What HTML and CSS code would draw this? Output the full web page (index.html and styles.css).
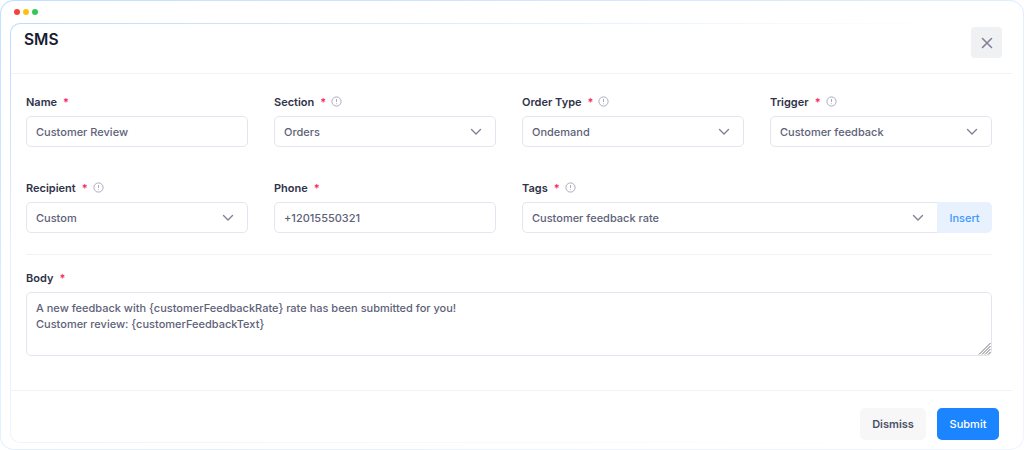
FILE: index.html
```html
<!DOCTYPE html>
<html lang="en">
<head>
<meta charset="utf-8">
<title>SMS</title>
<link rel="stylesheet" href="styles.css">
</head>
<body>
<div class="frame">
  <div class="dots"><span class="dot red"></span><span class="dot yellow"></span><span class="dot green"></span></div>
  <div class="modal">
    <header class="modal-head">
      <h1 class="title">SMS</h1>
      <button class="close" type="button" aria-label="Close">
        <svg width="12" height="12" viewBox="0 0 12 12"><path d="M1.5 1.5l9 9M10.5 1.5l-9 9" stroke="#7e8299" stroke-width="1.6" fill="none" stroke-linecap="round"/></svg>
      </button>
    </header>
    <div class="modal-body">
      <div class="grid">
        <div class="field">
          <div class="label">Name<span class="req">*</span></div>
          <div class="control">Customer Review</div>
        </div>
        <div class="field">
          <div class="label">Section<span class="req">*</span><svg class="info" width="11" height="11" viewBox="0 0 11 11"><circle cx="5.5" cy="5.5" r="4.6" fill="none" stroke="#a1a5b7" stroke-width="0.9"/><path d="M5.5 3v3M5.5 7.4v.7" stroke="#a1a5b7" stroke-width="0.9" fill="none"/></svg></div>
          <div class="control select">Orders<svg class="chev" width="12" height="8" viewBox="0 0 12 8"><path d="M1.5 1.5L6 6l4.5-4.5" stroke="#7e8299" stroke-width="1.4" fill="none" stroke-linecap="round" stroke-linejoin="round"/></svg></div>
        </div>
        <div class="field">
          <div class="label">Order Type<span class="req">*</span><svg class="info" width="11" height="11" viewBox="0 0 11 11"><circle cx="5.5" cy="5.5" r="4.6" fill="none" stroke="#a1a5b7" stroke-width="0.9"/><path d="M5.5 3v3M5.5 7.4v.7" stroke="#a1a5b7" stroke-width="0.9" fill="none"/></svg></div>
          <div class="control select">Ondemand<svg class="chev" width="12" height="8" viewBox="0 0 12 8"><path d="M1.5 1.5L6 6l4.5-4.5" stroke="#7e8299" stroke-width="1.4" fill="none" stroke-linecap="round" stroke-linejoin="round"/></svg></div>
        </div>
        <div class="field">
          <div class="label">Trigger<span class="req">*</span><svg class="info" width="11" height="11" viewBox="0 0 11 11"><circle cx="5.5" cy="5.5" r="4.6" fill="none" stroke="#a1a5b7" stroke-width="0.9"/><path d="M5.5 3v3M5.5 7.4v.7" stroke="#a1a5b7" stroke-width="0.9" fill="none"/></svg></div>
          <div class="control select">Customer feedback<svg class="chev" width="12" height="8" viewBox="0 0 12 8"><path d="M1.5 1.5L6 6l4.5-4.5" stroke="#7e8299" stroke-width="1.4" fill="none" stroke-linecap="round" stroke-linejoin="round"/></svg></div>
        </div>
        <div class="field">
          <div class="label">Recipient<span class="req">*</span><svg class="info" width="11" height="11" viewBox="0 0 11 11"><circle cx="5.5" cy="5.5" r="4.6" fill="none" stroke="#a1a5b7" stroke-width="0.9"/><path d="M5.5 3v3M5.5 7.4v.7" stroke="#a1a5b7" stroke-width="0.9" fill="none"/></svg></div>
          <div class="control select">Custom<svg class="chev" width="12" height="8" viewBox="0 0 12 8"><path d="M1.5 1.5L6 6l4.5-4.5" stroke="#7e8299" stroke-width="1.4" fill="none" stroke-linecap="round" stroke-linejoin="round"/></svg></div>
        </div>
        <div class="field">
          <div class="label">Phone<span class="req">*</span></div>
          <div class="control">+12015550321</div>
        </div>
        <div class="field wide">
          <div class="label">Tags<span class="req">*</span><svg class="info" width="11" height="11" viewBox="0 0 11 11"><circle cx="5.5" cy="5.5" r="4.6" fill="none" stroke="#a1a5b7" stroke-width="0.9"/><path d="M5.5 3v3M5.5 7.4v.7" stroke="#a1a5b7" stroke-width="0.9" fill="none"/></svg></div>
          <div class="group">
            <div class="control select joined">Customer feedback rate<svg class="chev" width="12" height="8" viewBox="0 0 12 8"><path d="M1.5 1.5L6 6l4.5-4.5" stroke="#7e8299" stroke-width="1.4" fill="none" stroke-linecap="round" stroke-linejoin="round"/></svg></div>
            <button class="insert" type="button">Insert</button>
          </div>
        </div>
      </div>
      <hr class="rule">
      <div class="field">
        <div class="label">Body<span class="req">*</span></div>
        <div class="textarea">A new feedback with {customerFeedbackRate} rate has been submitted for you!<br>Customer review: {customerFeedbackText}
          <svg class="grip" width="13" height="13" viewBox="0 0 13 13"><path d="M12.5 1L1 12.5M12.5 4L4 12.5M12.5 7L7 12.5M12.5 10L10 12.5" stroke="#777" stroke-width="1" fill="none"/></svg>
        </div>
      </div>
    </div>
    <footer class="modal-foot">
      <button class="btn light" type="button">Dismiss</button>
      <button class="btn primary" type="button">Submit</button>
    </footer>
  </div>
</div>
</body>
</html>
```
FILE: styles.css
```css
* { box-sizing: border-box; }
html, body { margin: 0; padding: 0; }
body {
  width: 1024px;
  height: 450px;
  overflow: hidden;
  background: #fff;
  font-family: Inter, "Liberation Sans", sans-serif;
  font-size: 11px;
}
.frame {
  width: 1024px;
  height: 450px;
  border: 1px solid transparent;
  border-radius: 14px;
  background:
    linear-gradient(#fff, #fff) padding-box,
    linear-gradient(160deg, #c4dffd 0%, #e3f0fe 50%, #eef5fd 100%) border-box;
  padding: 0 0 6px 9px;
  display: flex;
  flex-direction: column;
}
.dots { display: flex; gap: 3px; height: 22px; padding: 8px 0 0 4px; flex: none; }
.dot { width: 6px; height: 6px; border-radius: 50%; }
.red { background: #f6423c; }
.yellow { background: #fcc212; }
.green { background: #35c759; }
.modal {
  flex: 1;
  width: 1002px;
  border: 1px solid transparent;
  border-right: 0;
  border-radius: 10px 0 0 10px;
  background:
    linear-gradient(#fff, #fff) padding-box,
    linear-gradient(to right, transparent 0%, rgba(255,255,255,0.55) 50%, #fff 93%) border-box,
    linear-gradient(to bottom, #bcdcfd 0%, #e3f0fe 55%, #eef5fd 100%) border-box;
  display: flex;
  flex-direction: column;
}
.modal-head {
  height: 50px;
  flex: none;
  display: flex;
  justify-content: space-between;
  align-items: flex-start;
  border-bottom: 1px solid #f1f2f5;
  padding: 3px 10px 0 13px;
}
.title {
  margin: 3px 0 0;
  font-size: 15.5px;
  line-height: 20px;
  font-weight: 600;
  color: #181c32;
}
.close {
  width: 31px;
  height: 31px;
  border: 0;
  border-radius: 4px;
  background: #f0f1f3;
  display: flex;
  align-items: center;
  justify-content: center;
  padding: 0;
}
.modal-body { flex: none; height: 316px; padding: 21px 20px 0 15px; }
.grid {
  display: grid;
  grid-template-columns: repeat(4, 222px);
  column-gap: 26px;
  row-gap: 34px;
}
.wide { grid-column: span 2; }
.label {
  height: 15px;
  display: flex;
  align-items: center;
  font-size: 11px;
  line-height: 15px;
  font-weight: 600;
  color: #2f3349;
  margin-bottom: 6px;
}
.req { color: #f62a63; margin-left: 6px; font-size: 11px; }
.info { margin-left: 5px; margin-top: -2px; }
.control {
  height: 31px;
  border: 1px solid #e4e6ef;
  border-radius: 5px;
  background: #fff;
  padding: 0 9px;
  display: flex;
  align-items: center;
  justify-content: space-between;
  color: #5e6278;
  font-weight: 500;
  font-size: 11px;
}
.chev { margin-right: 4px; }
.group { display: flex; height: 31px; }
.joined { flex: 1; border-radius: 5px 0 0 5px; border-right: 0; }
.insert {
  width: 55px;
  border: 0;
  border-radius: 0 5px 5px 0;
  background: #e8f2ff;
  color: #3e97ff;
  font: 500 11px Inter, "Liberation Sans", sans-serif;
  padding: 0;
}
.rule {
  border: 0;
  border-top: 1px solid #f1f2f5;
  margin: 21px 0 16px;
}
.textarea {
  position: relative;
  height: 64px;
  border: 1px solid #e4e6ef;
  border-radius: 5px;
  padding: 7px 9px;
  color: #5e6278;
  font-weight: 500;
  font-size: 11px;
  line-height: 16px;
}
.grip { position: absolute; right: 0; bottom: 0; }
.modal-foot {
  flex: 1;
  border-top: 1px solid #f1f2f5;
  display: flex;
  justify-content: flex-end;
  gap: 11px;
  padding: 17px 13px 0 0;
}
.btn {
  height: 32px;
  border: 0;
  border-radius: 5px;
  font: 600 11px Inter, "Liberation Sans", sans-serif;
  padding: 0;
}
.light { width: 66px; background: #f7f7f8; color: #4b5069; }
.primary { width: 62px; background: #1b84ff; color: #fff; font-weight: 500; }
```
